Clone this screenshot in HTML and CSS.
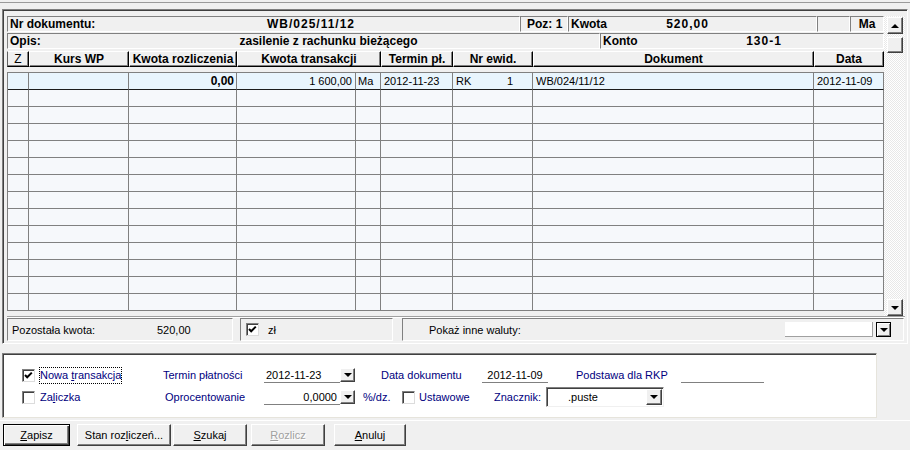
FILE: index.html
```html
<!DOCTYPE html>
<html>
<head>
<meta charset="utf-8">
<link rel="stylesheet" href="styles.css">
</head>
<body>
<div class="topbar"></div>
<div class="panel">
  <div class="main">
    <div class="gridcol">
      <div class="info r1">
        <div class="ibox"><span class="ilbl w95">Nr dokumentu:</span><span class="ival num">WB/025/11/12</span></div>
        <div class="ibox"><span class="pad6">Poz: 1</span></div>
        <div class="ibox"><span class="ilbl w50">Kwota</span><span class="ival num pr60">520,00</span></div>
        <div class="ibox"></div>
        <div class="ibox"><span class="ival">Ma</span></div>
      </div>
      <div class="info r2">
        <div class="ibox"><span class="ilbl w50">Opis:</span><span class="ival">zasilenie z rachunku bieżącego</span></div>
        <div class="ibox"><span class="ilbl w50">Konto</span><span class="ival num pr6">130-1</span></div>
      </div>
      <div class="thead">
        <div class="th first norm">Z</div>
        <div class="th">Kurs WP</div>
        <div class="th">Kwota rozliczenia</div>
        <div class="th">Kwota transakcji</div>
        <div class="th">Termin pł.</div>
        <div class="th">Nr ewid.</div>
        <div class="th">Dokument</div>
        <div class="th">Data</div>
      </div>
      <div class="tbody">
        <div class="tr sel">
          <div></div><div></div><div class="r b">0,00</div><div class="r">1 600,00</div><div class="ma">Ma</div><div>2012-11-23</div><div><span class="rk">RK</span>1</div><div>WB/024/11/12</div><div>2012-11-09</div>
        </div>
        <div class="tr"><div></div><div></div><div></div><div></div><div></div><div></div><div></div><div></div><div></div></div>
        <div class="tr"><div></div><div></div><div></div><div></div><div></div><div></div><div></div><div></div><div></div></div>
        <div class="tr"><div></div><div></div><div></div><div></div><div></div><div></div><div></div><div></div><div></div></div>
        <div class="tr"><div></div><div></div><div></div><div></div><div></div><div></div><div></div><div></div><div></div></div>
        <div class="tr"><div></div><div></div><div></div><div></div><div></div><div></div><div></div><div></div><div></div></div>
        <div class="tr"><div></div><div></div><div></div><div></div><div></div><div></div><div></div><div></div><div></div></div>
        <div class="tr"><div></div><div></div><div></div><div></div><div></div><div></div><div></div><div></div><div></div></div>
        <div class="tr"><div></div><div></div><div></div><div></div><div></div><div></div><div></div><div></div><div></div></div>
        <div class="tr"><div></div><div></div><div></div><div></div><div></div><div></div><div></div><div></div><div></div></div>
        <div class="tr"><div></div><div></div><div></div><div></div><div></div><div></div><div></div><div></div><div></div></div>
        <div class="tr"><div></div><div></div><div></div><div></div><div></div><div></div><div></div><div></div><div></div></div>
        <div class="tr"><div></div><div></div><div></div><div></div><div></div><div></div><div></div><div></div><div></div></div>
        <div class="tr"><div></div><div></div><div></div><div></div><div></div><div></div><div></div><div></div><div></div></div>
      </div>
    </div>
    <div class="vscroll">
      <div class="sbtn up"><span class="tri-up"></span></div>
      <div class="sbtn thumb"></div>
      <div class="sbtn down"><span class="tri-down"></span></div>
    </div>
  </div>
  <div class="sep"></div>
  <div class="status">
    <div class="sbox s1"><span class="slbl">Pozostała kwota:</span><span>520,00</span></div>
    <div class="sbox s2"><span class="chk"><svg width="11" height="11" viewBox="0 0 11 11"><path d="M2 5 L4.2 7.3 L8.8 2.6" stroke="#000" stroke-width="2" fill="none"/></svg></span><span class="zl">zł</span></div>
    <div class="sbox s3"><span>Pokaż inne waluty:</span><span class="inp"></span><span class="dd black"><span class="tri-down"></span></span></div>
  </div>
</div>

<div class="form">
  <div class="frow">
    <div class="cg"><span class="chk"><svg width="11" height="11" viewBox="0 0 11 11"><path d="M2 5 L4.2 7.3 L8.8 2.6" stroke="#000" stroke-width="2" fill="none"/></svg></span><span class="focus blue">Nowa <u>t</u>ransakcja</span></div>
    <span class="blue w101">Termin płatności</span>
    <span class="field w76 pl2">2012-11-23</span><span class="dd"><span class="tri-down"></span></span>
    <span class="blue w101 ml26">Data dokumentu</span>
    <span class="field w66 center">2012-11-09</span>
    <span class="blue w105 ml28">Podstawa dla RKP</span>
    <span class="field w83"></span>
  </div>
  <div class="frow row2">
    <div class="cg"><span class="chk"></span><span class="blue ml5">Za<u>l</u>iczka</span></div>
    <span class="blue w101 pl2">Oprocentowanie</span>
    <span class="field w76 right">0,0000</span><span class="dd"><span class="tri-down"></span></span>
    <span class="blue w39 ml8">%/dz.</span>
    <span class="chk"></span>
    <span class="blue w75 ml4">Ustawowe</span>
    <span class="blue w52">Znacznik:</span>
    <span class="combo"><span class="ctext">.puste</span><span class="dd cdd"><span class="tri-down"></span></span></span>
  </div>
</div>
<div class="hsep"></div>
<div class="btns">
  <div class="btn def w67"><u>Z</u>apisz</div>
  <div class="btn w94 ml7">Stan roz<u>l</u>iczeń...</div>
  <div class="btn w74 ml2"><u>S</u>zukaj</div>
  <div class="btn w74 ml4 dis"><u>R</u>ozlicz</div>
  <div class="btn w72 ml9"><u>A</u>nuluj</div>
</div>
</body>
</html>
```
FILE: styles.css
```css
* { box-sizing: border-box; }
html, body { margin: 0; padding: 0; }
body {
  width: 910px;
  height: 450px;
  overflow: hidden;
  background: #f0f0f0;
  font-family: "Liberation Sans", Arial, sans-serif;
  font-size: 11px;
  color: #000;
}
u { text-decoration: underline; text-underline-offset: 1px; }

.topbar { margin-top: 2px; height: 7px; border-top: 1px solid #9a9a9a; }

.panel {
  margin-left: 2px;
  width: 906px;
  border: 1px solid;
  border-color: #808080 #fff #fff #808080;
  box-shadow: inset 1px 1px 0 #404040;
  padding: 6px 2px 2px 4px;
}
.main { display: flex; }
.gridcol { width: 877px; }

.info { display: grid; height: 16px; }
.r1 { grid-template-columns: 513px 48px 249px 33px 34px; }
.r2 { grid-template-columns: 593px 284px; margin-top: 1px; }
.ibox {
  border: 1px solid;
  border-color: #808080 #fff #fff #808080;
  display: flex;
  align-items: center;
  font-weight: bold;
  font-size: 12px;
  line-height: 14px;
  white-space: nowrap;
  overflow: hidden;
}
.ilbl { flex: none; padding-left: 2px; }
.w95 { width: 95px; }
.w50 { width: 50px; }
.ival { flex: 1; text-align: center; }
.num { letter-spacing: 1px; }
.pr60 { padding-right: 60px; }
.pr6 { padding-right: 6px; }
.pad6 { padding-left: 6px; }

.thead {
  display: grid;
  grid-template-columns: 22px 100px 108px 144px 72px 80px 281px 70px;
  margin-top: 2px;
  height: 16px;
}
.th {
  border: 1px solid;
  border-color: #fff #000 #000 #fff;
  box-shadow: inset -1px -1px 0 #808080;
  font-weight: bold;
  font-size: 12px;
  line-height: 14px;
  text-align: center;
  white-space: nowrap;
  overflow: hidden;
}
.th.first { border-left-color: #606060; }
.th.norm { font-weight: normal; }

.tbody {
  margin-top: 5px;
  border-top: 1px solid #808080;
  border-left: 1px solid #808080;
}
.tr {
  display: grid;
  grid-template-columns: 21px 100px 108px 119px 25px 72px 80px 281px 70px;
  height: 17px;
  background: #f6f8fb;
}
.tr > div {
  border-right: 1px solid #808080;
  border-bottom: 1px solid #808080;
  line-height: 16px;
  padding: 0 3px;
  white-space: nowrap;
  overflow: hidden;
}
.tr.sel { background: #e9f5fd; }
.tr.sel > div { border-bottom-color: #1c1c1c; }
.tr > .r { text-align: right; }
.tr > .b { font-weight: bold; font-size: 12px; padding-right: 2px; }
.tr > .ma { padding-left: 2px; }
.rk { display: inline-block; width: 51px; }

.vscroll {
  width: 21px;
  height: 300px;
  display: flex;
  flex-direction: column;
  padding-left: 3px;
  background: repeating-conic-gradient(#ffffff 0 25%, #e8e8e8 0 50%) 0 0 / 2px 2px;
}
.sbtn {
  width: 16px;
  height: 17px;
  background: #f0f0f0;
  border: 1px solid;
  border-color: #fff #404040 #404040 #fff;
  box-shadow: inset -1px -1px 0 #808080;
  display: flex;
  align-items: center;
  justify-content: center;
}
.sbtn.up { margin-top: 1px; }
.sbtn.thumb { margin-top: 3px; height: 16px; }
.sbtn.down { margin-top: auto; }
.tri-up {
  width: 0; height: 0;
  border-left: 4px solid transparent;
  border-right: 4px solid transparent;
  border-bottom: 4px solid #000;
}
.tri-down {
  width: 0; height: 0;
  border-left: 4px solid transparent;
  border-right: 4px solid transparent;
  border-top: 4px solid #000;
}

.sep { height: 2px; border-top: 1px solid #a0a0a0; border-bottom: 1px solid #fff; }

.status { display: flex; height: 23px; }
.sbox {
  border: 1px solid;
  border-color: #808080 #fff #fff #808080;
  display: flex;
  align-items: center;
  white-space: nowrap;
}
.s1 { width: 226px; padding-left: 4px; }
.slbl { width: 145px; }
.s2 { width: 153px; margin-left: 7px; padding-left: 5px; }
.zl { margin-left: 9px; }
.s3 { width: 502px; margin-left: 9px; padding-left: 26px; padding-right: 12px; }
.inp {
  margin-left: auto;
  width: 88px;
  height: 15px;
  background: #fff;
  border-right: 1px solid #a0a0a0;
  border-bottom: 1px solid #a0a0a0;
}

.chk {
  flex: none;
  width: 13px;
  height: 13px;
  background: #fff;
  border: 1px solid;
  border-color: #808080 #dcdcdc #dcdcdc #808080;
  box-shadow: inset 1px 1px 0 #404040;
  display: flex;
  align-items: center;
  justify-content: center;
}
.chk svg { display: block; }

.dd {
  flex: none;
  width: 15px;
  height: 14px;
  background: #f0f0f0;
  border: 1px solid;
  border-color: #fff #404040 #404040 #fff;
  box-shadow: inset -1px -1px 0 #808080;
  display: flex;
  align-items: center;
  justify-content: center;
}
.dd.black {
  margin-left: 3px;
  height: 15px;
  border-color: #000;
  box-shadow: inset 1px 1px 0 #fff, inset -1px -1px 0 #808080;
}

.form {
  margin-top: 9px;
  margin-left: 2px;
  width: 875px;
  background: #fff;
  border: 1px solid;
  border-color: #808080 #e6e4dc #e6e4dc #808080;
  box-shadow: inset 1px 1px 0 #404040;
  padding: 11px 0 10px 19px;
}
.frow { display: flex; align-items: center; height: 20px; white-space: nowrap; }
.row2 { margin-top: 2px; }
.blue { color: #000080; }
.cg { flex: none; width: 141px; display: flex; align-items: center; }
.focus { margin-left: 4px; border: 1px dotted #000; line-height: 15px; padding: 0 0 0 0; }
.w101 { flex: none; width: 101px; }
.w105 { flex: none; width: 105px; }
.w39 { flex: none; width: 39px; }
.w75 { flex: none; width: 75px; }
.w52 { flex: none; width: 52px; }
.w76 { flex: none; width: 76px; }
.w66 { flex: none; width: 66px; }
.w83 { flex: none; width: 83px; }
.ml26 { margin-left: 26px; }
.ml28 { margin-left: 28px; }
.ml8 { margin-left: 8px; }
.ml4 { margin-left: 4px; }
.ml5 { margin-left: 5px; }
.pl2 { padding-left: 2px; }
.field { height: 15px; border-bottom: 1px solid #808080; line-height: 14px; }
.center { text-align: center; }
.right { text-align: right; padding-right: 3px; }

.combo {
  flex: none;
  width: 118px;
  height: 20px;
  border: 1px solid;
  border-color: #808080 #f0f0f0 #f0f0f0 #808080;
  box-shadow: inset 1px 1px 0 #404040;
  display: flex;
  align-items: center;
  background: #fff;
}
.ctext { padding-left: 21px; }
.cdd { margin-left: auto; margin-right: 1px; width: 16px; height: 16px; }

.hsep { margin-top: 2px; border-top: 1px solid #fff; }

.btns { display: flex; margin-top: 3px; padding-left: 3px; }
.btn {
  flex: none;
  height: 22px;
  background: #f0f0f0;
  border: 1px solid;
  border-color: #fff #404040 #404040 #fff;
  box-shadow: inset -1px -1px 0 #808080;
  text-align: center;
  line-height: 20px;
  white-space: nowrap;
}
.btn.def {
  border-color: #000;
  box-shadow: inset 1px 1px 0 #fff, inset -1px -1px 0 #404040, inset -2px -2px 0 #808080;
}
.btn.dis { color: #a0a0a0; text-shadow: 1px 1px 0 #fff; }
.w67 { width: 67px; }
.w94 { width: 94px; }
.w74 { width: 74px; }
.w72 { width: 72px; }
.ml7 { margin-left: 7px; }
.ml2 { margin-left: 2px; }
.ml9 { margin-left: 9px; }
```
